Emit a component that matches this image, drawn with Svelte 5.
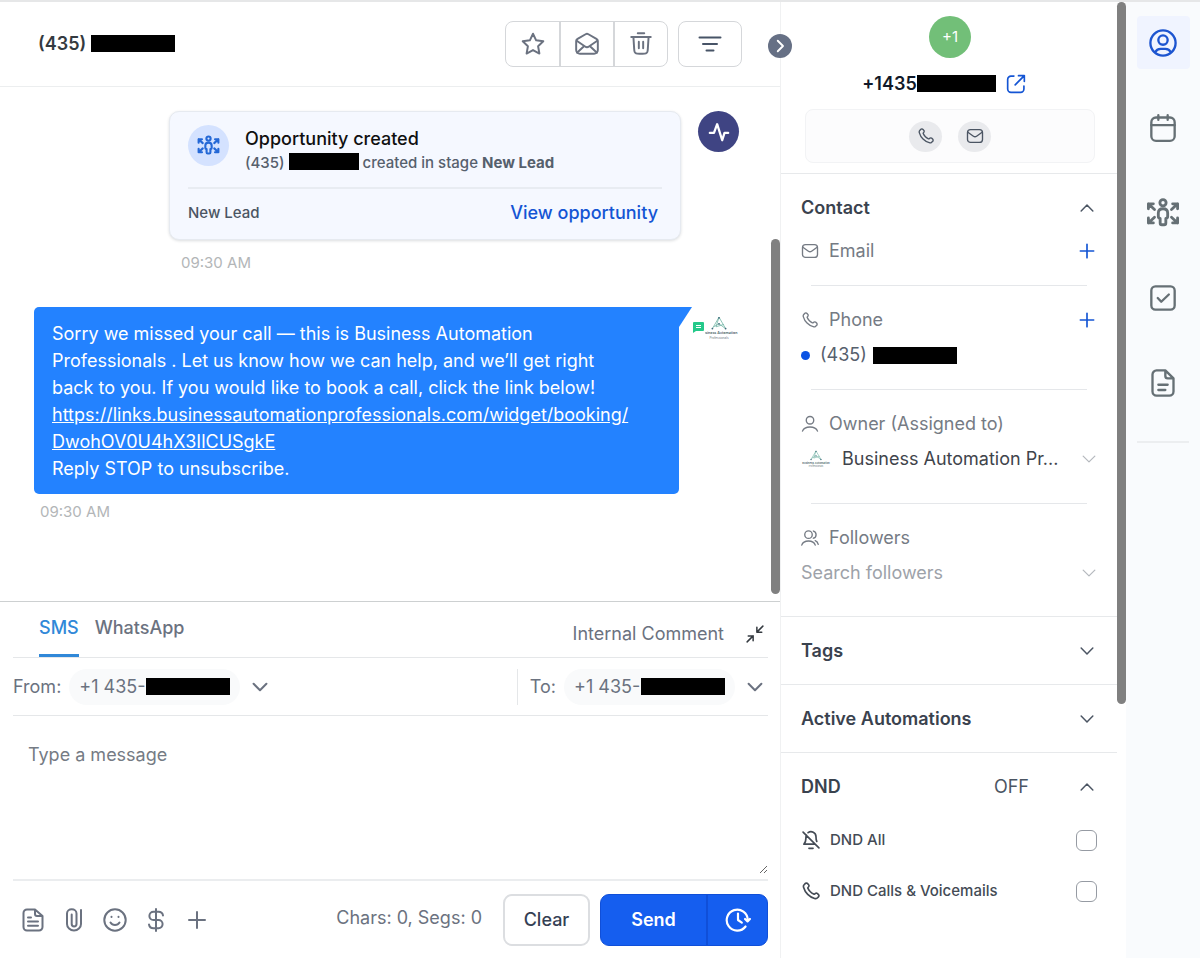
<script>
  const icons = {
    star: '<path d="m12 2.5 2.9 6.1 6.6.9-4.8 4.6 1.2 6.7-5.9-3.2-5.9 3.2 1.2-6.7L2.500 9.500l6.6-.9z"/>',
    mailOpen: '<path d="M2 9.500v8A3.500 3.500 0 0 0 5.500 21h13a3.500 3.500 0 0 0 3.500-3.500v-8c0-1-.4-1.700-1.300-2.200L13.300 3a2.600 2.600 0 0 0-2.600 0L3.300 7.300C2.400 7.800 2 8.500 2 9.500z"/><path d="m2.500 9 7.700 5.300a3.200 3.200 0 0 0 3.600 0L21.500 9M2.800 20l6.400-6M21.200 20l-6.400-6"/>',
    trash: '<path d="M9 2h6M3 5.500h18m-2 0-.7 11c-.1 1.600-.15 2.400-.5 3a3 3 0 0 1-1.300 1.200c-.6.3-1.400.3-3 .3h-3c-1.600 0-2.400 0-3-.3a3 3 0 0 1-1.300-1.200c-.35-.6-.4-1.400-.5-3L5 5.500m5 4.500v6m4-6v6"/>',
    filter: '<path d="M1.500 5.500h21M5 12h14M8.500 18.500h7"/>',
    right: '<path d="m9 5 7 7-7 7"/>',
    down: '<path d="m5 8.500 7 7 7-7"/>',
    up: '<path d="m5 15.500 7-7 7 7"/>',
    plus: '<path d="M12 4v16M4 12h16"/>',
    pulse: '<path d="M2 13h4.500L10 3.500 15.500 21 18 13h4"/>',
    external: '<path d="M15 2h7v7M22 2 11 13M9.500 2.500H6A4 4 0 0 0 2 6.500V18a4 4 0 0 0 4 4h11.500a4 4 0 0 0 4-4v-3.500"/>',
    mail: '<rect x="2" y="3.500" width="20" height="17" rx="4"/><path d="m2.500 7 7.400 5.300a3.500 3.500 0 0 0 4.200 0L21.500 7"/>',
    phone: '<path d="M8.380 8.853a14.600 14.600 0 0 0 2.847 4.010 14.600 14.600 0 0 0 4.010 2.847c.124.06.187.09.265.112.28.082.625.023.862-.147.067-.048.124-.105.239-.219.35-.35.524-.524.7-.639a2 2 0 0 1 2.180 0c.176.115.35.29.7.64l.195.194c.532.531.797.797.942 1.082a2 2 0 0 1 0 1.806c-.145.285-.41.551-.942 1.082l-.157.158c-.53.53-.795.794-1.155.997-.4.224-1.020.386-1.478.384-.413-.001-.695-.081-1.260-.241a19.040 19.040 0 0 1-8.283-4.874A19.040 19.040 0 0 1 3.170 7.761c-.16-.564-.24-.846-.241-1.260a3.380 3.380 0 0 1 .384-1.477c.202-.36.467-.625.997-1.155l.157-.158c.532-.53.798-.797 1.083-.941a2 2 0 0 1 1.805 0c.286.144.551.41 1.083.942l.195.194c.35.35.524.526.639.702a2 2 0 0 1 0 2.180c-.115.176-.29.35-.64.7-.114.115-.171.172-.22.239-.17.237-.228.582-.146.862.022.078.052.14.112.265z"/>',
    user: '<circle cx="12" cy="7" r="5"/><path d="M2 21.500c1.500-4 5.500-5.500 10-5.500s8.500 1.500 10 5.500"/>',
    users: '<circle cx="10" cy="7.500" r="5"/><path d="M1 21.500c1.200-3.800 4.800-5.500 9-5.500s7.800 1.700 9 5.500M16.500 2.700a5 5 0 0 1 0 9.600M19 15.500c2 .8 3.400 2.500 4 5"/>',
    bellOff: '<path d="M2.500 2.500l19 19M9.500 22h5M17 17H3.500c1.800-2 2.500-4 2.500-9 0-.7.1-1.300.4-2M8.500 3.200A6 6 0 0 1 18 8c0 2.500.3 4.300.9 5.700"/>',
    userCircle: '<circle cx="12" cy="12" r="10.800"/><circle cx="12" cy="9.500" r="4"/><path d="M5.500 19.800C6.300 17.700 8 17 10 17h4c2 0 3.700.7 4.500 2.800"/>',
    calendar: '<rect x="2" y="3" width="20" height="20" rx="4"/><path d="M2 9.500h20M8 1v4M16 1v4"/>',
    opportunity: '<circle cx="12" cy="4.800" r="2.200"/><path d="M12 9c-2.200 0-3.300 1.200-3.300 3v2.500c0 .7.4 1.200 1.300 1.300v3.200c0 .8.500 1.300 1.200 1.300h1.600c.7 0 1.200-.5 1.200-1.300v-3.200c.9-.1 1.300-.6 1.300-1.300V12c0-1.800-1.100-3-3.300-3z"/><path d="M1.700 9V5.500h3.500M1.700 5.500 6 9.500M22.300 9V5.500h-3.500M22.300 5.500 18 9.500M1.700 15.500V19h3.500M1.700 19 6 15M22.300 15.500V19h-3.500M22.300 19 18 15"/>',
    check: '<rect x="2" y="2" width="20" height="20" rx="3.500"/><path d="m7.500 12 3 3.200L17 9"/>',
    note: '<path d="M14 1.200H6.500A3.500 3.500 0 0 0 3 4.700v14.600a3.500 3.500 0 0 0 3.500 3.500h11a3.500 3.500 0 0 0 3.500-3.500V8zM14 1.200V6a2 2 0 0 0 2 2h5M8 13.500h8M8 18h6"/>',
    file: '<path d="M14 1.500H6A3.500 3.500 0 0 0 2.500 5v14A3.500 3.500 0 0 0 6 22.500h12a3.500 3.500 0 0 0 3.500-3.500V8zM14 1.500V6a2 2 0 0 0 2 2h5.500M7 9.500h3M7 13.500h10M7 17.700h10"/>',
    clip: '<path d="M19 2v14a7 6.500 0 0 1-14 0V5.500a4.500 4 0 0 1 9.500 0V16a2.400 2.400 0 0 1-4.800 0V6.500"/>',
    smile: '<circle cx="12" cy="12" r="10.700"/><path d="M7.500 14.500c1 1.700 2.600 2.500 4.500 2.500s3.500-.8 4.500-2.500M8.500 8.800v.3M15.500 8.800v.3"/>',
    dollar: '<path d="M5 16.500a4.500 4.500 0 0 0 4.500 3.700h5a4.100 4.100 0 0 0 0-8.200h-5a4.100 4.100 0 0 1 0-8.200h5A4.500 4.500 0 0 1 19 7.500M12 1v22"/>',
    collapse: '<path d="M22.500 1.500 14.500 9.500M14.500 3v6.500H21M1.500 22.500l8-8M3 14.500h6.500V21"/>',
    schedule: '<path d="m23 11-2.200 2.300L18.500 11M21 13v-1a9.700 9.700 0 1 0-2 6M12 6v6l3.500 2.500"/>'
  };

  const headerActions = [
    { icon: 'star', label: 'Star' },
    { icon: 'mailOpen', label: 'Mark as read' },
    { icon: 'trash', label: 'Delete' }
  ];

  const railItems = [
    { icon: 'userCircle', label: 'Contact details' },
    { icon: 'calendar', label: 'Appointments' },
    { icon: 'opportunity', label: 'Opportunities' },
    { icon: 'check', label: 'Tasks' },
    { icon: 'note', label: 'Notes' }
  ];

  const tools = [
    { icon: 'file', label: 'Templates' },
    { icon: 'clip', label: 'Attach file' },
    { icon: 'smile', label: 'Emoji' },
    { icon: 'dollar', label: 'Request payment' },
    { icon: 'plus', label: 'More' }
  ];

  const dndOptions = [
    { id: 'dnd-all', icon: 'bellOff', label: 'DND All' },
    { id: 'dnd-calls', icon: 'phone', label: 'DND Calls & Voicemails' }
  ];

  let tab = $state('SMS');
  let activeRail = $state('userCircle');
  let message = $state('');
  let segments = $derived(Math.ceil(message.length / 160));
</script>

{#snippet icon(name, size, stroke = 2)}
  <svg width={size} height={size} viewBox="0 0 24 24" fill="none" stroke="currentColor" stroke-width={stroke} stroke-linecap="round" stroke-linejoin="round" aria-hidden="true">
    {@html icons[name]}
  </svg>
{/snippet}

{#snippet logo(width, height)}
  <svg {width} {height} viewBox="0 0 66 40" aria-hidden="true">
    <path d="M33 2 22 21M33 2l11 19M33 2l-5 16 13-4M24 18l9-5 11 8" fill="none" stroke="#6fb3a4" stroke-width="1.300" />
    <g fill="#416b7c"><circle cx="33" cy="3" r="1.500" /><circle cx="22" cy="21" r="1.500" /><circle cx="44" cy="21" r="1.500" /><circle cx="33" cy="13" r="1.500" /></g>
    <text x="33" y="30" text-anchor="middle" font-size="6" font-weight="600" fill="#4b5f69">Business Automation</text>
    <text x="33" y="38" text-anchor="middle" font-size="5" fill="#6d7b82">Professionals</text>
  </svg>
{/snippet}

<div class="app">
  <main class="conversation">
    <header class="conv-header">
      <h1>(435) <span class="redacted"></span></h1>
      <div class="header-actions">
        <div class="btn-group">
          {#each headerActions as action}
            <button aria-label={action.label}>{@render icon(action.icon, 26, 1.800)}</button>
          {/each}
        </div>
        <button class="filter-btn" aria-label="Filter">{@render icon('filter', 24)}</button>
      </div>
    </header>

    <div class="chat">
      <div class="messages">
        <div class="row">
          <div class="opp-card">
            <div class="opp-top">
              <span class="opp-icon">{@render icon('opportunity', 23, 2.200)}</span>
              <div class="opp-info">
                <div class="opp-title">Opportunity created</div>
                <div class="opp-text">(435) <span class="redacted narrow"></span> created in stage <strong>New Lead</strong></div>
              </div>
            </div>
            <div class="opp-bottom">
              <span>New Lead</span>
              <a href="#opportunity">View opportunity</a>
            </div>
          </div>
          <span class="activity">{@render icon('pulse', 22, 2.500)}</span>
        </div>
        <div class="time card-time">09:30 AM</div>

        <div class="row sms">
          <div class="bubble">
            Sorry we missed your call — this is Business Automation<br />
            Professionals . Let us know how we can help, and we’ll get right<br />
            back to you. If you would like to book a call, click the link below!<br />
            <a href="#booking">https://links.businessautomationprofessionals.com/widget/booking/<br />DwohOV0U4hX3IlCUSgkE</a><br />
            Reply STOP to unsubscribe.
          </div>
          <div class="sender">
            {@render logo(40, 24)}
            <svg class="sms-badge" width="13" height="14" viewBox="-1 -1 13 14" aria-hidden="true">
              <path d="M-1-1h13v14H-1z" fill="#fff" />
              <path d="M1 0h9a1 1 0 0 1 1 1v7a1 1 0 0 1-1 1H3l-3 2V1a1 1 0 0 1 1-1z" fill="#24c98a" />
              <path d="M3 3.500h5M3 5.500h5" stroke="#fff" />
            </svg>
          </div>
        </div>
        <div class="time">09:30 AM</div>
      </div>
      <div class="chat-scroll"><div class="thumb"></div></div>
    </div>

    <section class="composer">
      <div class="tabs">
        <div class="tab-list" role="tablist">
          {#each ['SMS', 'WhatsApp'] as name}
            <button role="tab" aria-selected={tab === name} class:active={tab === name} onclick={() => (tab = name)}>{name}</button>
          {/each}
        </div>
        <button class="internal">Internal Comment</button>
        <button class="collapse" aria-label="Collapse">{@render icon('collapse', 18)}</button>
      </div>

      <div class="numbers">
        <div class="number from">
          <label for="from">From:</label>
          <div class="pill">
            <select id="from"><option>+1 435-</option></select>
            <span class="redacted"></span>
          </div>
          {@render icon('down', 22, 2.200)}
        </div>
        <div class="number to">
          <label for="to">To:</label>
          <div class="pill">
            <select id="to"><option>+1 435-</option></select>
            <span class="redacted"></span>
          </div>
          {@render icon('down', 22, 2.200)}
        </div>
      </div>

      <textarea aria-label="Message" placeholder="Type a message" bind:value={message}></textarea>

      <div class="composer-footer">
        <div class="tools">
          {#each tools as tool}
            <button aria-label={tool.label}>{@render icon(tool.icon, 24)}</button>
          {/each}
        </div>
        <span class="count">Chars: {message.length}, Segs: {segments}</span>
        <button class="clear" onclick={() => (message = '')}>Clear</button>
        <div class="send-group">
          <button class="send">Send</button>
          <button class="schedule" aria-label="Schedule">{@render icon('schedule', 26)}</button>
        </div>
      </div>
    </section>
  </main>

  <aside class="contact">
    <button class="panel-toggle" aria-label="Hide contact panel">{@render icon('right', 18, 2.500)}</button>
    <div class="contact-body">
      <div class="profile">
        <span class="avatar">+1</span>
        <div class="profile-name">
          <h2>+1435<span class="redacted"></span></h2>
          <a href="#contact" aria-label="Open contact">{@render icon('external', 20)}</a>
        </div>
        <div class="quick">
          <button aria-label="Call">{@render icon('phone', 18, 1.800)}</button>
          <button aria-label="Email">{@render icon('mail', 18, 1.800)}</button>
        </div>
      </div>

      <section>
        <div class="section-head">
          <h3>Contact</h3>
          <button aria-label="Collapse contact">{@render icon('up', 20, 1.800)}</button>
        </div>

        <div class="field email">
          <div class="field-head">
            {@render icon('mail', 18, 1.800)}
            <span>Email</span>
            <button class="add" aria-label="Add email">{@render icon('plus', 20)}</button>
          </div>
        </div>

        <div class="field phone">
          <div class="field-head">
            {@render icon('phone', 18, 1.800)}
            <span>Phone</span>
            <button class="add" aria-label="Add phone">{@render icon('plus', 20)}</button>
          </div>
          <div class="phone-value"><i></i>(435) <span class="redacted"></span></div>
        </div>

        <div class="field owner">
          <div class="field-head">
            {@render icon('user', 18, 1.800)}
            <label for="owner">Owner (Assigned to)</label>
          </div>
          <div class="picker">
            {@render logo(30, 18)}
            <select id="owner"><option>Business Automation Pr...</option></select>
            {@render icon('down', 20, 1.500)}
          </div>
        </div>

        <div class="field followers">
          <div class="field-head">
            {@render icon('users', 18, 1.800)}
            <label for="followers">Followers</label>
          </div>
          <div class="picker">
            <input id="followers" type="text" placeholder="Search followers" />
            {@render icon('down', 20, 1.500)}
          </div>
        </div>
      </section>

      {#each ['Tags', 'Active Automations'] as title}
        <section>
          <div class="section-head">
            <h3>{title}</h3>
            <button aria-label="Expand {title}">{@render icon('down', 20, 1.800)}</button>
          </div>
        </section>
      {/each}

      <section>
        <div class="section-head">
          <h3>DND</h3>
          <span class="state">OFF</span>
          <button aria-label="Collapse DND">{@render icon('up', 20, 1.800)}</button>
        </div>
        <div class="dnd-list">
          {#each dndOptions as option}
            <div class="dnd">
              {@render icon(option.icon, 20)}
              <label for={option.id}>{option.label}</label>
              <input id={option.id} type="checkbox" />
            </div>
          {/each}
        </div>
      </section>
    </div>
    <div class="contact-scroll"><div class="thumb"></div></div>
  </aside>

  <nav class="rail">
    {#each railItems as item}
      <button class:active={activeRail === item.icon} aria-label={item.label} onclick={() => (activeRail = item.icon)}>
        {@render icon(item.icon, item.icon === 'opportunity' ? 34 : 28)}
      </button>
    {/each}
    <hr />
  </nav>
</div>

<style>
  :global(body) {
    background: #fff;
  }

  .app {
    display: flex;
    box-sizing: border-box;
    min-height: 100vh;
    border-top: 2px solid #e6e7e8;
    background: #fff;
    color: #4b5563;
    font-family: Inter, "Liberation Sans", sans-serif;
    font-size: 18px;
    line-height: 24px;
  }

  .app * {
    box-sizing: border-box;
  }

  button,
  select,
  input,
  textarea {
    margin: 0;
    padding: 0;
    border: none;
    background: none;
    color: inherit;
    font: inherit;
  }

  button {
    display: flex;
    align-items: center;
    justify-content: center;
    cursor: pointer;
  }

  select {
    appearance: none;
  }

  svg {
    flex: none;
  }

  a {
    color: #1455d4;
    text-decoration: none;
  }

  h1,
  h2,
  h3 {
    margin: 0;
    font-size: 18px;
    font-weight: 600;
  }

  .redacted {
    display: inline-block;
    flex: none;
    width: 84px;
    height: 17px;
    background: #000;
    vertical-align: -2px;
  }

  .redacted.narrow {
    width: 70px;
  }

  .thumb {
    border-radius: 5px;
    background: #808080;
  }

  /* conversation */
  .conversation {
    display: flex;
    flex: 1;
    flex-direction: column;
    min-width: 0;
  }

  .conv-header {
    display: flex;
    align-items: center;
    justify-content: space-between;
    height: 85px;
    padding: 0 38px;
    border-bottom: 1px solid #eceeef;
  }

  h1 {
    color: #343a40;
  }

  .header-actions {
    display: flex;
    gap: 10px;
    color: #6b7280;
  }

  .btn-group {
    display: flex;
    border: 1px solid #d5d7da;
    border-radius: 8px;
  }

  .btn-group button {
    width: 53px;
    height: 44px;
  }

  .btn-group button + button {
    width: 54px;
    border-left: 2px solid #d5d7da;
  }

  .filter-btn {
    width: 64px;
    border: 1px solid #d5d7da;
    border-radius: 8px;
    color: #475467;
  }

  .chat {
    display: flex;
    flex: 1;
  }

  .messages {
    flex: 1;
    padding: 24px 32px 24px 34px;
  }

  .row {
    display: flex;
    align-items: flex-start;
    justify-content: flex-end;
    gap: 17px;
  }

  .opp-card {
    width: 512px;
    height: 129px;
    padding: 13px 18px;
    border: 1px solid #e6eaf0;
    border-radius: 10px;
    background: #f5f8ff;
    box-shadow: 0 1px 3px rgba(16, 24, 40, 0.15);
    font-size: 15px;
    font-weight: 500;
  }

  .opp-top {
    display: flex;
    gap: 16px;
    height: 64px;
    border-bottom: 2px solid #e8ecf2;
  }

  .opp-icon,
  .activity {
    display: flex;
    flex: none;
    align-items: center;
    justify-content: center;
    width: 41px;
    height: 41px;
    border-radius: 50%;
  }

  .opp-icon {
    background: #d4e2ff;
    color: #2468d6;
  }

  .activity {
    background: #3f4483;
    color: #fff;
  }

  .opp-info {
    padding-top: 2px;
  }

  .opp-title {
    color: #101010;
    font-size: 18px;
  }

  .opp-text {
    color: #56606d;
  }

  .opp-bottom {
    display: flex;
    align-items: center;
    justify-content: space-between;
    height: 48px;
    padding-right: 4px;
  }

  .opp-bottom a {
    font-size: 18px;
  }

  .time {
    margin-top: 6px;
    padding-left: 6px;
    color: #b3b6b8;
    font-size: 15px;
  }

  .card-time {
    width: 512px;
    margin: 11px 58px 0 auto;
    padding-left: 12px;
  }

  .sms {
    gap: 0;
    margin-top: 32px;
  }

  .bubble {
    position: relative;
    flex: 1;
    padding: 13px 18px 12px;
    border-radius: 5px 0 5px 5px;
    background: #2382ff;
    color: #fff;
    line-height: 27px;
  }

  .bubble::after {
    content: "";
    position: absolute;
    top: 0;
    left: 100%;
    border-top: 20px solid #2382ff;
    border-right: 13px solid transparent;
  }

  .bubble a {
    color: #fff;
    text-decoration: underline;
  }

  .sender {
    position: relative;
    display: flex;
    justify-content: flex-end;
    width: 60px;
    padding-top: 9px;
  }

  /* channel badge sits over the avatar */
  .sms-badge {
    position: absolute;
    top: 14px;
    left: 13px;
  }

  .chat-scroll {
    width: 9px;
    padding: 152px 0 7px;
  }

  .chat-scroll .thumb {
    height: 355px;
  }

  /* composer */
  .composer {
    padding: 0 12px 0 13px;
    border-top: 1px solid #cdd0d1;
    color: #6b7280;
  }

  .tabs {
    display: flex;
    align-items: center;
    height: 56px;
    border-bottom: 1px solid #e5e7e9;
  }

  .tab-list {
    display: flex;
    flex: 1;
    align-self: stretch;
    gap: 16px;
    padding-left: 26px;
  }

  .tab-list button {
    border-bottom: 3px solid transparent;
    font-weight: 500;
  }

  .tab-list .active {
    border-color: #3088d8;
    color: #3088d8;
  }

  .internal {
    padding-top: 8px;
  }

  .collapse {
    margin: 8px 4px 0 22px;
    color: #343a40;
  }

  .numbers {
    display: flex;
    height: 58px;
    align-items: center;
    border-bottom: 1px solid #e5e7e9;
  }

  .number {
    display: flex;
    align-items: center;
    height: 36px;
  }

  .from {
    flex: 1;
  }

  .to {
    padding: 0 2px 0 12px;
    border-left: 1px solid #e5e7e9;
  }

  .pill {
    display: flex;
    align-items: center;
    height: 36px;
    margin: 0 9px 0 8px;
    padding: 0 10px;
    border-radius: 18px;
    background: #f9fafb;
  }

  textarea {
    display: block;
    width: 100%;
    height: 158px;
    margin-bottom: 5px;
    padding: 27px 15px;
    resize: vertical;
  }

  textarea::placeholder {
    color: #757b84;
  }

  .composer-footer {
    display: flex;
    align-items: center;
    height: 79px;
    border-top: 2px solid #ebedef;
  }

  .tools {
    display: flex;
    flex: 1;
    gap: 17px;
    padding-left: 8px;
  }

  .count {
    margin-right: 21px;
    padding-bottom: 4px;
  }

  .clear {
    width: 87px;
    height: 52px;
    margin-right: 10px;
    border: 2px solid #dcdee1;
    border-radius: 9px;
    color: #344054;
    font-weight: 500;
  }

  .send-group {
    display: flex;
    height: 52px;
    overflow: hidden;
    border: 1px solid #104fd8;
    border-radius: 9px;
    background: #155eef;
    color: #fff;
  }

  .send {
    width: 105px;
    font-weight: 600;
  }

  .schedule {
    width: 61px;
    border-left: 2px solid #104fd8;
  }

  /* contact panel */
  .contact {
    position: relative;
    display: flex;
    flex: none;
    width: 346px;
    border-left: 1px solid #f0f1f2;
  }

  .panel-toggle {
    position: absolute;
    top: 32px;
    left: -13px;
    width: 24px;
    height: 24px;
    border-radius: 50%;
    background: #667085;
    color: #fff;
  }

  .contact-body {
    flex: 1;
    min-width: 0;
  }

  .contact-scroll {
    flex: none;
    width: 9px;
  }

  .contact-scroll .thumb {
    height: 702px;
  }

  .profile {
    display: flex;
    flex-direction: column;
    align-items: center;
    height: 171px;
    padding: 14px 22px 0 24px;
  }

  .avatar {
    display: flex;
    align-items: center;
    justify-content: center;
    width: 42px;
    height: 42px;
    border-radius: 50%;
    background: #72bf78;
    color: #fff;
    font-size: 15px;
  }

  .profile-name {
    display: flex;
    align-items: center;
    gap: 10px;
    margin: 14px 12px 13px 0;
    color: #101828;
  }

  .profile-name .redacted {
    width: 79px;
  }

  .profile-name svg,
  .field-head svg {
    display: block;
  }

  .quick {
    display: flex;
    align-items: center;
    justify-content: center;
    gap: 16px;
    width: 100%;
    height: 54px;
    border: 1px solid #f2f3f5;
    border-radius: 8px;
    background: #fcfcfd;
  }

  .quick button {
    width: 33px;
    height: 31px;
    border-radius: 50%;
    background: #e9eaed;
  }

  .contact section {
    border-top: 1px solid #e7e9eb;
  }

  .section-head {
    display: flex;
    align-items: center;
    height: 67px;
    padding: 0 20px;
  }

  h3 {
    flex: 1;
    color: #3a424e;
  }

  .state {
    margin-right: 48px;
  }

  .field {
    margin: 0 20px;
    color: #757b84;
  }

  /* divider is inset from the field text */
  .field:not(:last-child)::after {
    content: "";
    display: block;
    margin: 0 10px;
    border-top: 1px solid #e5e7ea;
  }

  .field-head {
    display: flex;
    align-items: center;
    gap: 10px;
  }

  .field-head .add {
    margin-left: auto;
    color: #1455d4;
  }

  .email .field-head {
    height: 44px;
    padding-bottom: 24px;
  }

  .phone .field-head,
  .owner .field-head,
  .followers .field-head {
    height: 24px;
    margin-top: 22px;
  }

  .phone-value {
    display: flex;
    align-items: center;
    gap: 6px;
    height: 46px;
    margin-bottom: 11px;
    color: #56606d;
  }

  .phone-value i {
    width: 9px;
    height: 9px;
    margin-right: 4px;
    border-radius: 50%;
    background: #0b53e4;
  }

  .picker {
    display: flex;
    align-items: center;
    height: 46px;
    margin-right: -2px;
    color: #b5b9be;
  }

  .picker select,
  .picker input {
    flex: 1;
    min-width: 0;
  }

  .picker select {
    padding-left: 11px;
    color: #3f444b;
  }

  .picker input::placeholder {
    color: #9da2a9;
  }

  .owner .picker {
    margin-bottom: 21px;
  }

  .followers .picker {
    margin-bottom: 20px;
  }

  .dnd-list {
    display: grid;
    gap: 11px;
  }

  .dnd {
    display: flex;
    align-items: center;
    gap: 9px;
    height: 40px;
    padding: 0 20px;
    color: #444b55;
    font-size: 15px;
    font-weight: 500;
  }

  .dnd label {
    flex: 1;
  }

  .dnd input {
    appearance: none;
    width: 21px;
    height: 21px;
    border: 1px solid #969ba3;
    border-radius: 6px;
    background: #fff;
  }

  /* icon rail */
  .rail {
    display: flex;
    flex: none;
    flex-direction: column;
    align-items: center;
    gap: 32px;
    width: 74px;
    padding-top: 14px;
    background: #f9fbfd;
    color: #667075;
  }

  .rail button {
    width: 53px;
    height: 53px;
    border-radius: 4px;
  }

  .rail .active {
    background: #f0f4ff;
    color: #1d55d0;
  }

  .rail hr {
    width: 52px;
    margin: 0;
    border: none;
    border-top: 2px solid #eceef0;
  }
</style>
